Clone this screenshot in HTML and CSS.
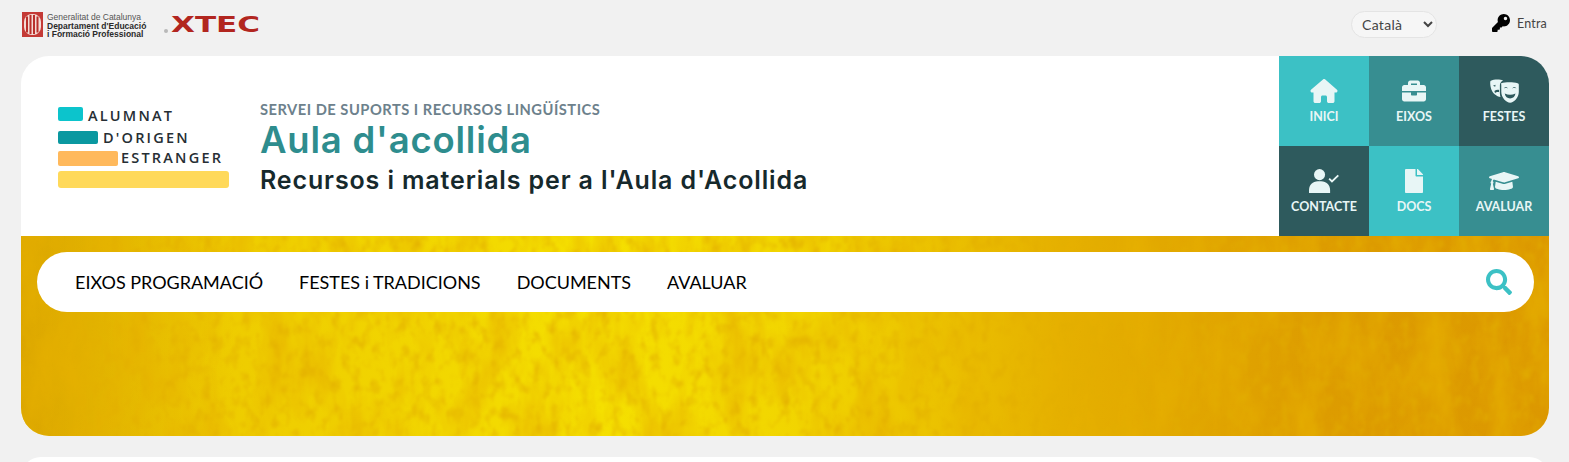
FILE: index.html
```html
<!DOCTYPE html>
<html lang="ca">
<head>
<meta charset="utf-8">
<title>Aula d'acollida</title>
<link rel="stylesheet" href="styles.css">
</head>
<body>
<div class="topbar">
  <div class="brands">
    <div class="gencat">
      <svg class="gencat-mark" viewBox="0 0 21 25"><rect width="21" height="25" fill="#c43a36"/><rect x="2" y="2" width="17" height="21" rx="8" fill="#f4dcd6"/><path d="M5 4.500v16M8.500 3v19M12 3v19M15.500 4.500v16" fill="none" stroke="#b92f2b" stroke-width="2"/></svg>
      <div class="gencat-text">
        <span class="gencat-light">Generalitat de Catalunya</span>
        <span>Departament d'Educació</span>
        <span>i Formació Professional</span>
      </div>
    </div>
    <div class="xtec"><i class="xtec-dot"></i><span class="xtec-word">XTEC</span></div>
  </div>
  <div class="session">
    <select class="lang"><option>Català</option></select>
    <a class="login"><svg class="key" viewBox="0 0 512 512"><path d="M512 176C512 273 433 352 336 352c-11 0-22-1-33-3l-24 27a24 24 0 0 1-18 8H224v40c0 13-11 24-24 24h-40v40c0 13-11 24-24 24H24c-13 0-24-11-24-24v-78c0-6 3-12 7-17l162-162C163 214 160 195 160 176 160 79 239 0 336 0 433 0 512 79 512 176zM336 128c0 27 21 48 48 48s48-21 48-48-21-48-48-48-48 21-48 48z"/></svg>Entra</a>
  </div>
</div>

<main class="card">
  <header class="head">
    <div class="logo">
      <div class="logo-row row-a"><i class="bar"></i><span>ALUMNAT</span></div>
      <div class="logo-row row-b"><i class="bar"></i><span>D'ORIGEN</span></div>
      <div class="logo-row row-c"><i class="bar"></i><span>ESTRANGER</span></div>
      <div class="logo-row row-d"><i class="bar"></i></div>
    </div>
    <div class="titles">
      <div class="eyebrow">SERVEI DE SUPORTS I RECURSOS LINGÜÍSTICS</div>
      <h1>Aula d'acollida</h1>
      <h2>Recursos i materials per a l'Aula d'Acollida</h2>
    </div>
    <nav class="tiles">
      <a class="tile light"><svg viewBox="0 0 576 512"><path d="M575.8 255.500c0 18-15 32.100-32 32.100h-32l.7 160.200c0 2.700-.2 5.400-.5 8.100V472c0 22.100-17.900 40-40 40H392c-22.100 0-40-17.900-40-40v-88c0-17.700-14.300-32-32-32h-64c-17.700 0-32 14.300-32 32v88c0 22.100-17.900 40-40 40H104c-22.100 0-40-17.900-40-40V287.600H32c-18 0-32-14-32-32.100 0-9 3-17 10-24L266.400 8c7-7 15-8 22-8s15 2 21 7L564.800 231.500c8 7 12 15 11 24z"/></svg>INICI</a>
      <a class="tile mid"><svg viewBox="0 0 512 512"><path d="M320 336c0 8.840-7.160 16-16 16h-96c-8.840 0-16-7.160-16-16v-48H0v144c0 25.600 22.400 48 48 48h416c25.600 0 48-22.400 48-48V288H320v48zm144-208h-80V80c0-25.600-22.400-48-48-48H176c-25.600 0-48 22.400-48 48v48H48c-25.600 0-48 22.400-48 48v80h512v-80c0-25.600-22.400-48-48-48zm-144 0H192V96h128v32z"/></svg>EIXOS</a>
      <a class="tile dark"><svg viewBox="0 0 640 512"><path fill-rule="evenodd" d="M30 40C110 0 230 0 300 30 260 50 232 90 232 130V300c0 30 4 60 12 85C170 370 60 310 35 170 25 120 22 70 30 40zM85 145l55-20-8 38zM115 255c30-20 60-28 100-22v48c-35-5-65 0-85 22z"/><path fill-rule="evenodd" d="M262 90C350 60 520 60 610 90 628 96 636 108 636 124V270C636 400 530 500 450 505 370 500 262 400 262 270V124C262 108 248 96 262 90zM315 205c20-36 70-36 90 0-30-14-60-14-90 0zM495 205c20-36 70-36 90 0-30-14-60-14-90 0zM335 310c75 36 155 36 230 0-15 70-55 105-115 105s-100-35-115-105z"/></svg>FESTES</a>
      <a class="tile dark"><svg viewBox="0 0 640 512"><circle cx="225" cy="120" r="118"/><path d="M0 512v-60c0-110 80-190 190-190h70c110 0 190 80 190 190v60z"/><path class="tick" d="M430 205l60 60 135-130"/></svg>CONTACTE</a>
      <a class="tile light"><svg viewBox="0 0 384 512"><path d="M224 136V0H24C10.700 0 0 10.700 0 24v464c0 13.300 10.700 24 24 24h336c13.300 0 24-10.700 24-24V160H248c-13.200 0-24-10.800-24-24zm160-14.100v6.100H256V0h6.100c6.400 0 12.500 2.500 17 7l97.900 98c4.500 4.500 7 10.600 7 16.900z"/></svg>DOCS</a>
      <a class="tile mid"><svg viewBox="0 0 640 512"><path d="M622.340 153.200L343.400 67.500c-15.200-4.670-31.600-4.670-46.790 0L17.660 153.200c-23.540 7.230-23.540 38.360 0 45.590l48.630 14.940c-10.670 13.190-17.230 29.280-17.880 46.900C38.780 266.150 32 276.110 32 288c0 10.780 5.680 19.850 13.860 25.650L20.330 428.530C18.110 438.520 25.710 448 35.940 448h56.110c10.240 0 17.840-9.480 15.620-19.470L82.140 313.650C90.320 307.850 96 298.780 96 288c0-11.570-6.470-21.250-15.660-26.870.76-15.020 8.440-28.300 20.690-36.720L296.600 284.500c9.060 2.780 26.440 6.250 46.790 0l278.950-85.700c23.550-7.240 23.550-38.360 0-45.600zM352.790 315.090c-28.530 8.760-52.840 3.920-65.590 0l-145.020-44.550L128 384c0 35.350 85.960 64 192 64s192-28.650 192-64l-14.180-113.470-145.030 44.560z"/></svg>AVALUAR</a>
    </nav>
  </header>
  <section class="hero">
    <svg class="texture" aria-hidden="true">
      <filter id="smudge" x="0" y="0" width="100%" height="100%"><feTurbulence type="fractalNoise" baseFrequency=".03 .012" numOctaves="4" seed="11"/><feColorMatrix values="0 0 0 0 .80  0 0 0 0 .44  0 0 0 0 0  1.500 0 0 0 -.6"/></filter>
      <filter id="speck" x="0" y="0" width="100%" height="100%"><feTurbulence type="fractalNoise" baseFrequency=".1 .07" numOctaves="4" seed="4"/><feColorMatrix values="0 0 0 0 .76  0 0 0 0 .42  0 0 0 0 0  1.800 0 0 0 -.86"/><feGaussianBlur stdDeviation=".8"/></filter>
      <rect width="100%" height="100%" filter="url(#smudge)"/>
      <rect width="100%" height="100%" filter="url(#speck)"/>
    </svg>
    <div class="menu">
      <a>EIXOS PROGRAMACIÓ</a>
      <a>FESTES i TRADICIONS</a>
      <a>DOCUMENTS</a>
      <a>AVALUAR</a>
      <svg class="search" viewBox="0 0 512 512"><path d="M505 442.700L405.300 343c-4.500-4.500-10.600-7-17-7H372c27.600-35.300 44-79.700 44-128C416 93.100 322.900 0 208 0S0 93.100 0 208s93.100 208 208 208c48.300 0 92.700-16.400 128-44v16.300c0 6.400 2.500 12.500 7 17l99.700 99.700c9.400 9.400 24.600 9.400 33.900 0l28.300-28.300c9.400-9.400 9.400-24.600.1-34zM208 336c-70.700 0-128-57.200-128-128 0-70.700 57.200-128 128-128 70.700 0 128 57.200 128 128 0 70.700-57.200 128-128 128z"/></svg>
    </div>
  </section>
</main>
<div class="next"></div>
</body>
</html>
```

FILE: styles.css
```css
* { box-sizing: border-box; }
html, body { margin: 0; height: 462px; overflow: hidden; }
body { background: #f1f1f1; font-family: Lato, sans-serif; color: #000; padding: 0 20px 0 21px; }

.topbar { height: 56px; display: flex; justify-content: space-between; align-items: flex-start; }
.brands { display: flex; align-items: flex-start; padding-top: 12px; }
.gencat { display: flex; gap: 4px; width: 143px; padding-left: 1px; }
.gencat-mark { width: 21px; height: 25px; flex: none; }
.gencat-text { font: 700 8.500px/8.500px "Liberation Sans", sans-serif; color: #2a2a2a; display: flex; flex-direction: column; white-space: nowrap; padding-top: 1px; }
.gencat-light { font-weight: 400; color: #555; }
.xtec { display: flex; align-items: flex-end; height: 22px; }
.xtec-dot { width: 4px; height: 4px; border-radius: 50%; background: #b9b9b9; margin-bottom: 1px; margin-right: 3px; }
.xtec-word { font: 700 22px/24px "DejaVu Sans", sans-serif; color: #b2261f; display: block; transform: translateY(3px) scaleX(1.41); transform-origin: left; }

.session { display: flex; align-items: flex-start; width: 198px; justify-content: space-between; padding-top: 11px; }
.lang { width: 86px; height: 27px; border: 1px solid #e4e4e4; border-radius: 14px; background: #f6f6f6; font: 400 14px Lato, sans-serif; color: #444; padding-left: 6px; letter-spacing: .3px; }
.login { display: flex; align-items: center; gap: 7px; font-size: 12.500px; color: #444; line-height: 18px; padding-top: 4px; margin-right: 2px; letter-spacing: .2px; }
.key { width: 18px; height: 18px; margin-top: -3px; }

.card { height: 380px; border-radius: 28px; overflow: hidden; background: #fff; }
.head { height: 180px; display: flex; }
.logo { width: 239px; padding: 51px 0 0 37px; flex: none; display: flex; flex-direction: column; font: 600 14.500px/16px "Open Sans", sans-serif; letter-spacing: 2.200px; color: #262e34; }
.logo-row { display: flex; align-items: center; gap: 5px; }
.logo-row span { position: relative; }
.bar { display: block; height: 100%; border-radius: 2px; }
.row-a { height: 14px; }
.row-a span { top: 2px; }
.row-a .bar { width: 25px; background: #0cc4cc; }
.row-b { height: 13px; margin-top: 10px; }
.row-b .bar { width: 40px; background: #0a98a0; }
.row-c { height: 15px; margin-top: 7px; gap: 3px; }
.row-c span { top: -1px; }
.row-c .bar { width: 60px; background: #ffb95c; }
.row-d { height: 17px; margin-top: 5px; }
.row-d .bar { width: 171px; background: #ffd95a; border-radius: 3px; }

.titles { flex: 1; padding-top: 44px; }
.eyebrow { font: 700 14.700px/18px Lato, sans-serif; color: #6d818c; letter-spacing: .5px; }
h1 { margin: 0; font: 600 36.500px/44px Inter, sans-serif; color: #2e8d8e; letter-spacing: .78px; }
h2 { margin: 0; font: 600 25px/33px Inter, sans-serif; color: #16292c; letter-spacing: .87px; padding-top: 2px; }

.tiles { width: 270px; flex: none; display: grid; grid-template-columns: repeat(3, 90px); grid-auto-rows: 90px; }
.tile { display: flex; flex-direction: column; align-items: center; font: 700 12.500px/16px Lato, sans-serif; color: #e8f6f6; padding-top: 23px; gap: 6px; }
.tile svg { height: 24px; width: 30px; fill: #e8f6f6; }
.tile .tick { fill: none; stroke: #e8f6f6; stroke-width: 40; }
.light { background: #3cc1c5; }
.mid { background: #378e91; }
.dark { background: #2e5a5d; }

.hero { height: 200px; position: relative; padding: 16px 15px 0 16px; background: linear-gradient(90deg, rgba(196, 120, 0, .4) 0%, rgba(196, 120, 0, 0) 14%), linear-gradient(90deg, #ebc400 0%, #efcf00 18%, #f5e000 38%, #f1d400 52%, #e5b000 68%, #dd9c00 85%, #dc9800 100%); }
.texture { position: absolute; left: 0; top: 0; width: 100%; height: 100%; }
.menu { position: relative; height: 60px; border-radius: 30px; background: #fff; display: flex; align-items: center; gap: 36px; padding: 0 22px 0 38px; font-size: 18px; letter-spacing: -.02px; }
.search { width: 26px; height: 26px; margin-left: auto; fill: #3cc1c5; }

.next { height: 5px; margin-top: 21px; overflow: hidden; }
.next::before { content: ""; display: block; height: 40px; background: #fff; border-radius: 24px; }
```
